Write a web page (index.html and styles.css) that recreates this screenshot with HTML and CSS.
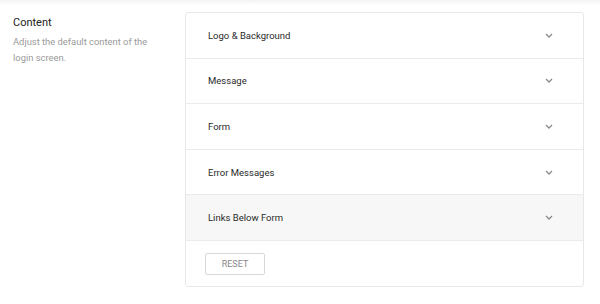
FILE: index.html
```html
<!DOCTYPE html>
<html>
<head>
  <meta charset="utf-8" />
  <title>Content</title>
  <meta name="viewport" content="width=device-width, initial-scale=1">
  <link rel="stylesheet" href="styles.css">
</head>
<body>
  <div class="top-shade"></div>
  <div class="section">
    <div class="section-info">
      <h3>Content</h3>
      <p>Adjust the default content of the login screen.</p>
    </div>
    <div class="panel">
      <div class="panel-row">
        <span>Logo &amp; Background</span>
        <svg class="chev" width="8" height="5" viewBox="0 0 8 5"><path d="M1 1 L4 4 L7 1" fill="none" stroke="#8a8a8a" stroke-width="1.3"/></svg>
      </div>
      <div class="panel-row">
        <span>Message</span>
        <svg class="chev" width="8" height="5" viewBox="0 0 8 5"><path d="M1 1 L4 4 L7 1" fill="none" stroke="#8a8a8a" stroke-width="1.3"/></svg>
      </div>
      <div class="panel-row">
        <span>Form</span>
        <svg class="chev" width="8" height="5" viewBox="0 0 8 5"><path d="M1 1 L4 4 L7 1" fill="none" stroke="#8a8a8a" stroke-width="1.3"/></svg>
      </div>
      <div class="panel-row">
        <span>Error Messages</span>
        <svg class="chev" width="8" height="5" viewBox="0 0 8 5"><path d="M1 1 L4 4 L7 1" fill="none" stroke="#8a8a8a" stroke-width="1.3"/></svg>
      </div>
      <div class="panel-row hover">
        <span>Links Below Form</span>
        <svg class="chev" width="8" height="5" viewBox="0 0 8 5"><path d="M1 1 L4 4 L7 1" fill="none" stroke="#8a8a8a" stroke-width="1.3"/></svg>
      </div>
      <div class="panel-foot">
        <button class="btn-reset">RESET</button>
      </div>
    </div>
  </div>
</body>
</html>
```

FILE: styles.css
```css
html, body {
  margin: 0px;
  padding: 0px;
  background: #fff;
  font-family: Roboto, "Liberation Sans", sans-serif;
}
.top-shade {
  height: 5px;
  background: linear-gradient(#f3f3f3, #fff);
}
.section {
  display: flex;
  padding: 7px 16px 0 13px;
}
.section-info {
  width: 172px;
  flex: none;
}
.section-info h3 {
  margin: 4px 0 0;
  font-size: 11px;
  line-height: 14px;
  font-weight: 400;
  color: #222;
}
.section-info p {
  margin: 4px 0 0;
  width: 145px;
  font-size: 9.4px;
  line-height: 16px;
  color: #9a9a9a;
}
.panel {
  flex: 1;
  border: 1px solid #e8e8e8;
  border-radius: 3px;
}
.panel-row {
  display: flex;
  align-items: center;
  justify-content: space-between;
  height: 44.6px;
  padding: 0 30px 0 22px;
  border-bottom: 1px solid #ebebeb;
  font-size: 9.5px;
  color: #2a2a2a;
}
.panel-row.hover {
  background: #f7f7f7;
}
.panel-foot {
  padding: 12px 19px 11px;
  line-height: 0;
}
.btn-reset {
  width: 60px;
  height: 22px;
  border: 1px solid #d8d8d8;
  border-radius: 2px;
  background: #fff;
  font-family: inherit;
  font-size: 9px;
  line-height: 20px;
  color: #888;
  padding: 0;
}
```
